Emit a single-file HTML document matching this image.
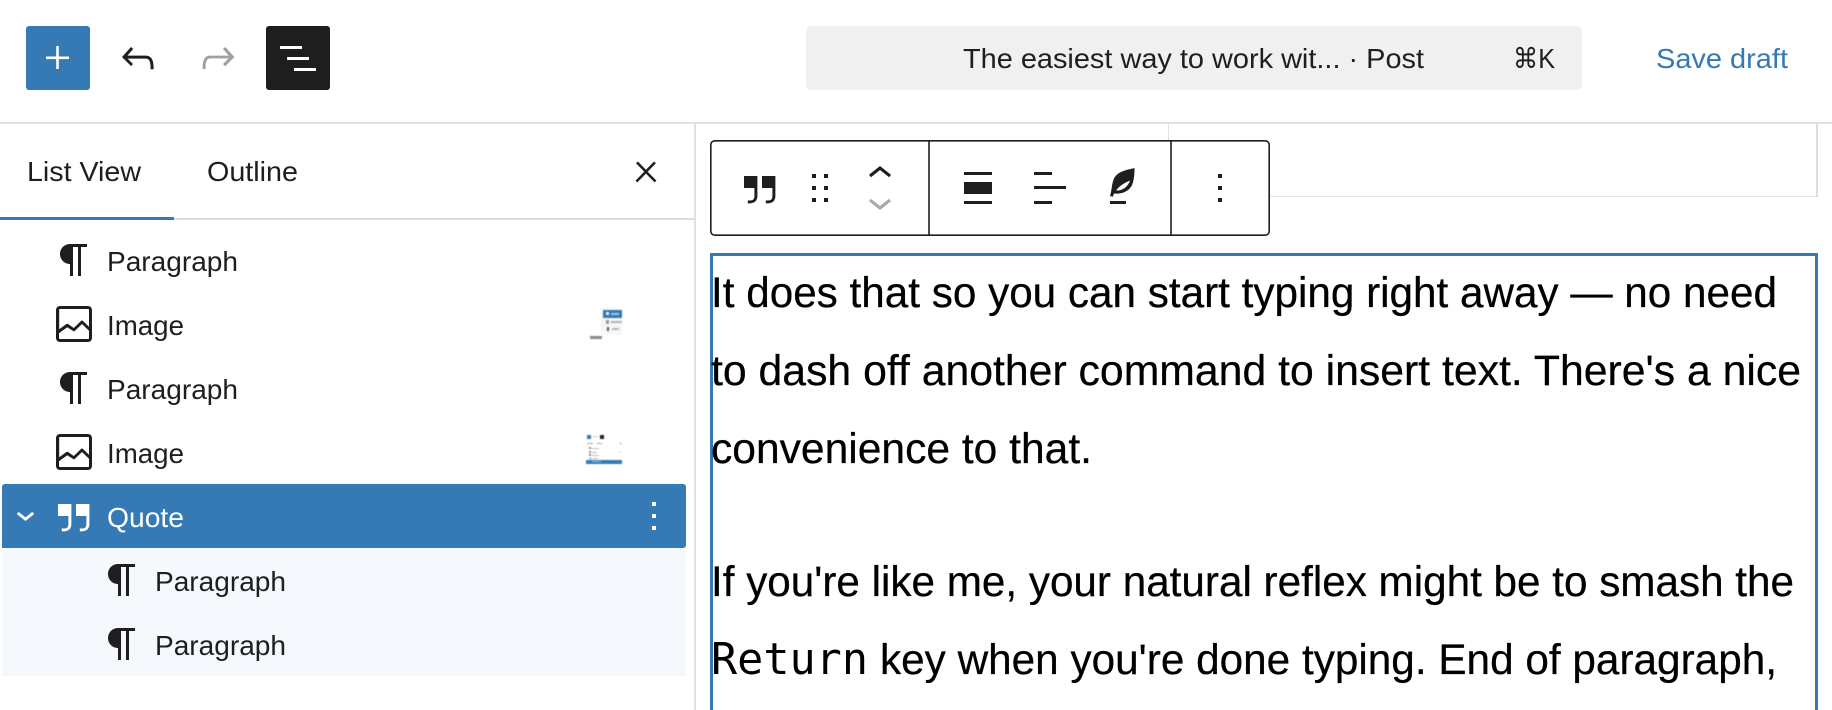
<!DOCTYPE html>
<html lang="en">
<head>
<meta charset="utf-8">
<title>Editor</title>
<style>
html,body{margin:0;padding:0;background:#fff;width:1832px;height:710px;overflow:hidden}
svg{display:block;position:absolute;left:0;top:0}
text{font-family:"Liberation Sans",sans-serif;fill:#1e1e1e}
.ui{font-size:28px}
.body{font-size:42.5px;fill:#000;stroke:#000;stroke-width:.25px}
.mono{font-family:"DejaVu Sans Mono",monospace;font-size:43.5px;fill:#000}
.thumb{filter:blur(.45px)}
</style>
</head>
<body>
<svg width="1832" height="710" viewBox="0 0 1832 710" xmlns="http://www.w3.org/2000/svg">
<defs>
<path id="para" d="m9.99609 14v-.2251l.00391.0001v6.225h1.5v-14.5h2.5v14.5h1.5v-14.5h3v-1.5h-8.50391c-2.76142 0-5 2.23858-5 5 0 2.7614 2.23858 5 5 5z"/>
<path id="img" d="M19 3H5c-1.1 0-2 .9-2 2v14c0 1.1.9 2 2 2h14c1.1 0 2-.9 2-2V5c0-1.1-.9-2-2-2zM5 4.500h14c.3 0 .5.2.5.5v8.400l-3-2.900c-.3-.3-.8-.3-1 0L11.900 14 9 12c-.3-.2-.6-.2-.8 0l-3.600 2.600V5c-.1-.3.1-.5.4-.5zm14 15H5c-.3 0-.5-.2-.5-.5v-2.400l4.100-3 3 1.900c.3.2.7.2.9-.1L16 12l3.500 3.400V19c0 .3-.2.5-.5.5z"/>
<path id="quote" d="M13 6v6h5.2v4c0 .8-.2 1.400-.5 1.700-.6.6-1.600.6-2.500.5h-.3v1.500h.5c1 0 2.300-.1 3.300-1 .6-.6 1-1.600 1-2.700V6H13zm-9 6h5.200v4c0 .8-.2 1.400-.5 1.700-.6.6-1.600.6-2.500.5h-.3v1.500h.5c1 0 2.300-.1 3.300-1 .6-.6 1-1.600 1-2.700V6H4v6z"/>
<path id="more" d="M13 19h-2v-2h2v2zm0-6h-2v-2h2v2zm0-6h-2V5h2v2z"/>
</defs>

<!-- header -->
<rect x="26" y="26" width="64" height="64" rx="3" fill="#3579b5"/>
<rect x="46" y="56.500" width="23" height="2.600" fill="#fff"/>
<rect x="56.200" y="46" width="2.600" height="23" fill="#fff"/>
<path transform="translate(114,34) scale(2)" fill="#1e1e1e" d="M18.300 11.700c-.6-.6-1.400-.9-2.300-.9H6.700l2.900-3.300-1.100-1-4.500 5L8.500 16l1-1-2.700-2.700H16c.5 0 .9.2 1.300.5 1 1 1 3.400 1 4.500v.3h1.500v-.2c0-1.500 0-4.300-1.500-5.700z"/>
<path transform="translate(194,34) scale(2)" fill="#a0a0a0" d="M15.600 6.500l-1.100 1 2.900 3.300H8c-.9 0-1.700.3-2.300.9-1.400 1.500-1.400 4.200-1.400 5.600v.2h1.500v-.3c0-1.100 0-3.500 1-4.500.3-.3.7-.5 1.300-.5h9.200L14.500 15l1.100 1.100 4.600-4.600-4.600-5z"/>
<rect x="266" y="26" width="64" height="64" rx="3" fill="#1e1e1e"/>
<path transform="translate(274,34) scale(2)" fill="#fff" d="M3 6h11v1.500H3V6Zm3.500 5.500h11V13h-11v-1.500ZM21 17H10v1.500h11V17Z"/>
<rect x="806" y="26" width="776" height="64" rx="6" fill="#f0f0f0"/>
<text class="ui" x="963" y="68" textLength="461" lengthAdjust="spacingAndGlyphs">The easiest way to work wit... · Post</text>
<text class="ui" x="1513" y="68" textLength="42" lengthAdjust="spacingAndGlyphs">⌘K</text>
<text class="ui" x="1656" y="68" textLength="132" lengthAdjust="spacingAndGlyphs" style="fill:#3579b5">Save draft</text>
<rect x="0" y="122" width="1832" height="2" fill="#e0e0e0"/>

<!-- sidebar -->
<rect x="694" y="124" width="2" height="586" fill="#e0e0e0"/>
<text class="ui" x="27" y="181" textLength="114" lengthAdjust="spacingAndGlyphs">List View</text>
<text class="ui" x="207" y="181" textLength="91" lengthAdjust="spacingAndGlyphs">Outline</text>
<path transform="translate(630,156) scale(1.33)" fill="#1e1e1e" stroke="#1e1e1e" stroke-width=".5" d="M13 11.800l6.100-6.300-1-1-6.100 6.200-6.100-6.200-1 1 6.100 6.300-6.500 6.700 1 1 6.500-6.600 6.500 6.600 1-1z"/>
<rect x="0" y="218" width="694" height="2" fill="#dddddd"/>
<rect x="0" y="217" width="174" height="3" fill="#3579b5"/>

<use href="#para" transform="translate(50,236) scale(2)" fill="#1e1e1e"/>
<text class="ui" x="107" y="271" textLength="131" lengthAdjust="spacingAndGlyphs">Paragraph</text>
<use href="#img" transform="translate(50,300) scale(2)" fill="#1e1e1e"/>
<text class="ui" x="107" y="335" textLength="77" lengthAdjust="spacingAndGlyphs">Image</text>
<use href="#para" transform="translate(50,364) scale(2)" fill="#1e1e1e"/>
<text class="ui" x="107" y="399" textLength="131" lengthAdjust="spacingAndGlyphs">Paragraph</text>
<use href="#img" transform="translate(50,428) scale(2)" fill="#1e1e1e"/>
<text class="ui" x="107" y="463" textLength="77" lengthAdjust="spacingAndGlyphs">Image</text>

<!-- thumb 1 -->
<g class="thumb">
<rect x="601" y="308" width="21" height="27" fill="#f6f6f6"/>
<rect x="603" y="310" width="19" height="8" fill="#3579b5"/>
<rect x="606" y="312" width="3" height="3" fill="#dfe9f2"/>
<rect x="611" y="313" width="8" height="2" fill="#a9c6de"/>
<rect x="606" y="320" width="3" height="4" fill="#9a9a9a"/>
<rect x="611" y="321" width="11" height="2" fill="#b4b4b4"/>
<rect x="607" y="327" width="2" height="4" fill="#555"/>
<rect x="612" y="328" width="7" height="2" fill="#b4b4b4"/>
<rect x="590" y="336" width="12" height="3" fill="#8a8a8a"/>
</g>
<!-- thumb 2 -->
<g class="thumb">
<rect x="587" y="435" width="4" height="4" fill="#3579b5"/>
<rect x="593" y="436" width="5" height="1" fill="#c8c8c8"/>
<rect x="600" y="435" width="4" height="4" fill="#222"/>
<rect x="587" y="443" width="6" height="1" fill="#aaa"/>
<rect x="597" y="443" width="5" height="1" fill="#aaa"/>
<rect x="620" y="443" width="1" height="1" fill="#555"/>
<rect x="589" y="447" width="2" height="2" fill="#888"/>
<rect x="592" y="448" width="7" height="1" fill="#bbb"/>
<rect x="589" y="451" width="2" height="2" fill="#888"/>
<rect x="592" y="452" width="5" height="1" fill="#bbb"/>
<rect x="619" y="451" width="2" height="2" fill="#ddd"/>
<rect x="589" y="454" width="2" height="2" fill="#888"/>
<rect x="592" y="455" width="7" height="1" fill="#bbb"/>
<rect x="589" y="458" width="3" height="1" fill="#888"/>
<rect x="593" y="458" width="5" height="1" fill="#bbb"/>
<rect x="586" y="460" width="36" height="4" fill="#3579b5"/>
<rect x="592" y="461" width="9" height="1" fill="#9dbfdb"/>
</g>

<!-- selected row -->
<path d="M2 548V487a3 3 0 0 1 3-3H683a3 3 0 0 1 3 3V545a3 3 0 0 1-3 3Z" fill="#3579b5"/>
<rect x="2" y="548" width="684" height="128" fill="#f5f8fc"/>
<path transform="translate(7.500,496.700) scale(1.500)" fill="#fff" stroke="#fff" stroke-width=".35" d="M17.500 11.600L12 16l-5.500-4.400.9-1.200L12 14l4.500-3.600 1 1.200z"/>
<use href="#quote" transform="translate(50,492) scale(2)" fill="#fff"/>
<text class="ui" x="107" y="527" textLength="77" lengthAdjust="spacingAndGlyphs" style="fill:#fff">Quote</text>
<use href="#more" transform="translate(630,492) scale(2)" fill="#fff"/>
<use href="#para" transform="translate(98,556) scale(2)" fill="#1e1e1e"/>
<text class="ui" x="155" y="591" textLength="131" lengthAdjust="spacingAndGlyphs">Paragraph</text>
<use href="#para" transform="translate(98,620) scale(2)" fill="#1e1e1e"/>
<text class="ui" x="155" y="655" textLength="131" lengthAdjust="spacingAndGlyphs">Paragraph</text>

<!-- canvas lines -->
<rect x="1168" y="124" width="1" height="73" fill="#e2e2e2"/>
<rect x="1168" y="196" width="650" height="1" fill="#e4e4e4"/>
<rect x="1816" y="124" width="2" height="73" fill="#dcdcdc"/>

<!-- block toolbar -->
<rect x="710.800" y="140.800" width="558.400" height="94.400" rx="4" fill="#fff" stroke="#1e1e1e" stroke-width="1.600"/>
<rect x="928.200" y="141" width="1.600" height="94" fill="#1e1e1e"/>
<rect x="1170.200" y="141" width="1.600" height="94" fill="#1e1e1e"/>
<use href="#quote" transform="translate(736,164) scale(2)" fill="#1e1e1e"/>
<path transform="translate(796,164) scale(2)" fill="#1e1e1e" d="M8 7h2V5H8v2zm0 6h2v-2H8v2zm0 6h2v-2H8v2zm6-14v2h2V5h-2zm0 8h2v-2h-2v2zm0 6h2v-2h-2v2z"/>
<path transform="translate(856,150) scale(2)" fill="#1e1e1e" d="M6.500 12.400L12 8l5.500 4.400-.9 1.200L12 10l-4.500 3.600-1-1.200z"/>
<path transform="translate(856,178) scale(2)" fill="#a8a8a8" d="M17.500 11.600L12 16l-5.500-4.400.9-1.200L12 14l4.500-3.600 1 1.200z"/>
<rect x="964" y="172" width="28" height="3" fill="#1e1e1e"/>
<rect x="964" y="182" width="28" height="12" fill="#1e1e1e"/>
<rect x="964" y="201" width="28" height="3" fill="#1e1e1e"/>
<rect x="1034" y="172" width="18" height="3" fill="#1e1e1e"/>
<rect x="1034" y="186" width="32" height="3" fill="#1e1e1e"/>
<rect x="1034" y="201" width="18" height="3" fill="#1e1e1e"/>
<path fill="#1e1e1e" d="M1134.500 168C1127 170 1118 171 1114 178.500C1111.500 184 1112 190 1110 196L1112.800 196.800L1114 193.500C1122 194.500 1130.500 191 1132.800 183C1134.300 178 1134.500 172 1134.500 168Z"/>
<path fill="#fff" d="M1116 190.500C1120 185.500 1124 183 1130 180.500C1128 187 1122 191 1116 190.500Z"/>
<rect x="1110" y="201" width="16" height="3" fill="#1e1e1e"/>
<use href="#more" transform="translate(1196,164) scale(2)" fill="#1e1e1e"/>

<!-- selected block outline -->
<path d="M711.500 710V254.500H1816.500V710" fill="none" stroke="#3579b5" stroke-width="3"/>

<!-- content -->
<text class="body" x="711" y="307" textLength="1066" lengthAdjust="spacingAndGlyphs">It does that so you can start typing right away — no need</text>
<text class="body" x="711" y="385" textLength="1090" lengthAdjust="spacingAndGlyphs">to dash off another command to insert text. There's a nice</text>
<text class="body" x="711" y="463" textLength="381" lengthAdjust="spacingAndGlyphs">convenience to that.</text>
<text class="body" x="711" y="596" textLength="1083" lengthAdjust="spacingAndGlyphs">If you're like me, your natural reflex might be to smash the</text>
<text class="mono" x="711" y="674" textLength="157" lengthAdjust="spacingAndGlyphs">Return</text>
<text class="body" x="880" y="674" textLength="897" lengthAdjust="spacingAndGlyphs">key when you're done typing. End of paragraph,</text>
</svg>
</body>
</html>
